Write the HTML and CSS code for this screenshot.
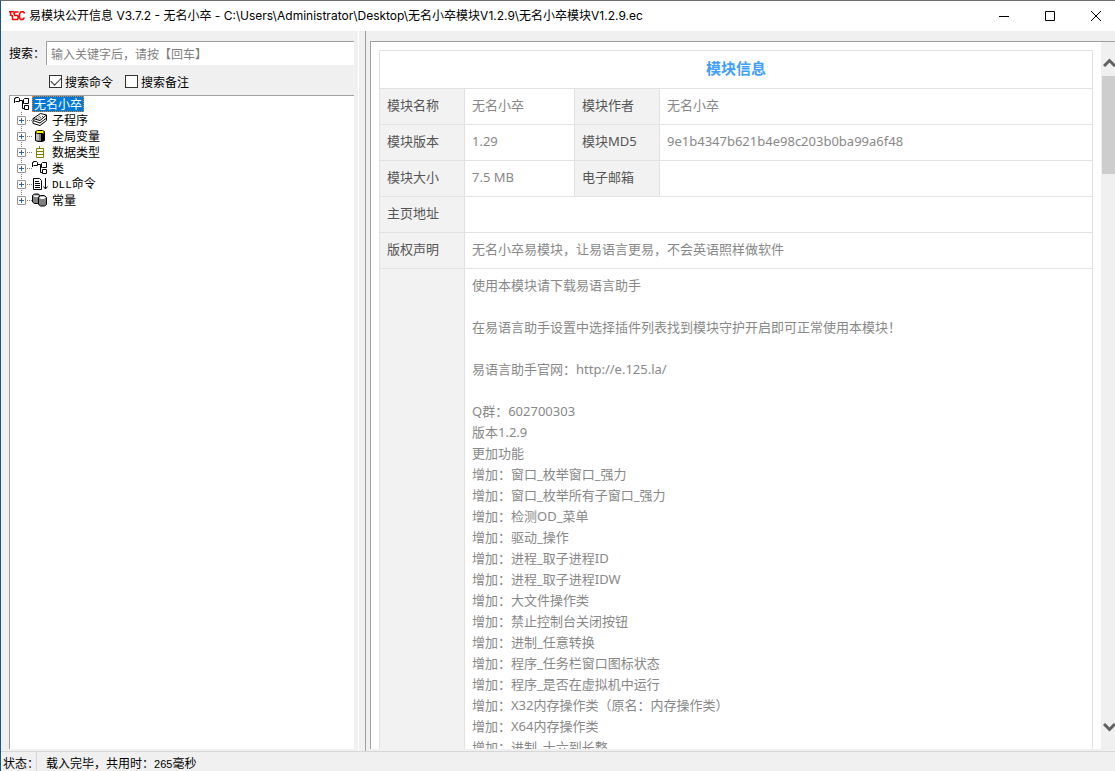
FILE: index.html
```html
<!DOCTYPE html>
<html lang="zh-CN">
<head>
<meta charset="utf-8">
<title>易模块公开信息 V3.7.2</title>
<link rel="stylesheet" href="styles.css">
</head>
<body>
<svg class="defs" aria-hidden="true">
  <symbol id="i-class" viewBox="0 0 16 16">
    <path d="M.5 7V2.500h1v-1h3l1 1v3h-4M5.500 4.500h3v8h2M10.500 7.500h-1v-4l1-1h4v5zM10.500 9.500h4v4h-4z" fill="none" stroke="#000"/>
  </symbol>
  <symbol id="i-sub" viewBox="0 0 16 16">
    <path d="M1 10l6-6 8-2-1 9-7 4-5-2z" fill="#fff"/>
    <path d="M1 6.500L8.500 1.500l6 1.500L8 8.500zM1 6.500v2L8 11l6.500-5V3M1 9v2.500L8 13.500 14.500 8.500V6" fill="none" stroke="#000"/>
    <path d="M4 6.500l5-3M6.500 7l5-3" stroke="#000" stroke-dasharray="1 1"/>
  </symbol>
  <symbol id="i-global" viewBox="0 0 16 16">
    <path d="M3.500 4v8.500l2 1h5l2-1V4z" fill="#808080" stroke="#000"/>
    <path d="M9 6h3v7H9z" fill="#000"/><path d="M4 6h3v6H4z" fill="#c0c0c0"/>
    <path d="M5.500 2.500h5l2 1v1l-2 1h-5l-2-1v-1z" fill="#ff0" stroke="#000"/>
  </symbol>
  <symbol id="i-type" viewBox="0 0 16 16">
    <path d="M4.500 4.500h7v9h-7zM4.500 7.500h7M4.500 10.500h7M7.500 2v2" fill="none" stroke="#808000"/>
  </symbol>
  <symbol id="i-dll" viewBox="0 0 16 16">
    <path d="M1.500 2.500h6l2 2v9h-8zM3 5.500h4M3 7.500h5M3 9.500h5M3 11.500h5M13.500 2v11M11.500 10.500l2 2.500 2-2.500" fill="none" stroke="#000"/>
  </symbol>
  <symbol id="i-const" viewBox="0 0 16 16">
    <path d="M.5 3.500l2-1.500h4l1 1.500V10l-2 1.500h-3l-2-1.500z" fill="#808080" stroke="#000"/>
    <path d="M1 3.500h6L5.500 5h-3z" fill="#fff"/>
    <path d="M6.500 5.500l2-2h4l2 2v7l-2 1.500h-4l-2-1.500z" fill="#808080" stroke="#000"/>
    <path d="M7 5.500l2-1h3l2 1-2 1.500H9z" fill="#fff"/>
  </symbol>
</svg>
<div class="window">
  <header class="titlebar">
    <svg class="logo" viewBox="0 0 16 12" aria-hidden="true"><g fill="none" stroke="#f00" stroke-width="1.500"><path d="M0 1.700h5M1.500 2v3l2 1v4M9.500 2H6L5 3.500 6 5.500h2.500l1 1.500-1 2.500H4M15.500 3.500l-1-1.800H12L10.500 4v3.500l1 2H14l1.500-2"/></g></svg>
    <h1 class="title">易模块公开信息 V3.7.2 - 无名小卒 - C:\Users\Administrator\Desktop\无名小卒模块V1.2.9\无名小卒模块V1.2.9.ec</h1>
    <div class="caption">
      <button class="cap" aria-label="最小化"><svg viewBox="0 0 10 10"><path d="M0 5.500h10"/></svg></button>
      <button class="cap" aria-label="最大化"><svg viewBox="0 0 10 10"><path d="M.5.500h9v9h-9z"/></svg></button>
      <button class="cap" aria-label="关闭"><svg viewBox="0 0 10 10"><path d="M0 0l10 10M10 0L0 10"/></svg></button>
    </div>
  </header>
  <main class="body">
    <section class="left">
      <div class="search">
        <label for="q">搜索：</label>
        <input id="q" class="query" type="text" placeholder="输入关键字后，请按【回车】">
      </div>
      <div class="options">
        <label class="opt"><input type="checkbox" checked>搜索命令</label>
        <label class="opt"><input type="checkbox">搜索备注</label>
      </div>
      <div class="tree">
        <div class="node"><svg class="icon"><use href="#i-class"/></svg><span class="name selected">无名小卒</span></div>
        <ul class="children">
          <li class="node"><button class="expander" aria-label="展开"></button><svg class="icon"><use href="#i-sub"/></svg><span class="name">子程序</span></li>
          <li class="node"><button class="expander" aria-label="展开"></button><svg class="icon"><use href="#i-global"/></svg><span class="name">全局变量</span></li>
          <li class="node"><button class="expander" aria-label="展开"></button><svg class="icon"><use href="#i-type"/></svg><span class="name">数据类型</span></li>
          <li class="node"><button class="expander" aria-label="展开"></button><svg class="icon"><use href="#i-class"/></svg><span class="name">类</span></li>
          <li class="node"><button class="expander" aria-label="展开"></button><svg class="icon"><use href="#i-dll"/></svg><span class="name"><span class="latin">DLL</span>命令</span></li>
          <li class="node"><button class="expander" aria-label="展开"></button><svg class="icon"><use href="#i-const"/></svg><span class="name">常量</span></li>
        </ul>
      </div>
    </section>
    <div class="splitter"></div>
    <section class="right">
      <div class="view">
        <div class="page">
          <table class="info">
            <colgroup><col class="c-label"><col class="c-value"><col class="c-label"><col></colgroup>
            <thead><tr><th class="heading" colspan="4">模块信息</th></tr></thead>
            <tbody>
              <tr><th>模块名称</th><td>无名小卒</td><th>模块作者</th><td>无名小卒</td></tr>
              <tr><th>模块版本</th><td>1.29</td><th>模块MD5</th><td>9e1b4347b621b4e98c203b0ba99a6f48</td></tr>
              <tr><th>模块大小</th><td>7.5 MB</td><th>电子邮箱</th><td></td></tr>
              <tr><th>主页地址</th><td colspan="3"></td></tr>
              <tr><th>版权声明</th><td colspan="3">无名小卒易模块，让易语言更易，不会英语照样做软件</td></tr>
              <tr><th></th><td colspan="3">使用本模块请下载易语言助手<br><br>在易语言助手设置中选择插件列表找到模块守护开启即可正常使用本模块！<br><br>易语言助手官网：http://e.125.la/<br><br>Q群：602700303<br>版本1.2.9<br>更加功能<br>增加：窗口_枚举窗口_强力<br>增加：窗口_枚举所有子窗口_强力<br>增加：检测OD_菜单<br>增加：驱动_操作<br>增加：进程_取子进程ID<br>增加：进程_取子进程IDW<br>增加：大文件操作类<br>增加：禁止控制台关闭按钮<br>增加：进制_任意转换<br>增加：程序_任务栏窗口图标状态<br>增加：程序_是否在虚拟机中运行<br>增加：X32内存操作类（原名：内存操作类）<br>增加：X64内存操作类<br>增加：进制_十六到长整</td></tr>
            </tbody>
          </table>
        </div>
        <div class="scrollbar">
          <button class="arrow up" aria-label="向上滚动"><svg viewBox="0 0 13 9"><path d="M1 8l5.500-5.500L12 8"/></svg></button>
          <div class="track"><div class="thumb"></div></div>
          <button class="arrow down" aria-label="向下滚动"><svg viewBox="0 0 13 9"><path d="M1 1l5.500 5.500L12 1"/></svg></button>
        </div>
      </div>
    </section>
  </main>
  <footer class="status"><span class="state">状态：</span><span class="message">载入完毕，共用时：<span class="digits">265</span>毫秒</span></footer>
</div>
</body>
</html>
```
FILE: styles.css
```css
* { box-sizing: border-box; }
html, body { height: 100%; margin: 0; }
body { overflow: hidden; color: #000; font: 12px/16px "Noto Sans CJK SC", sans-serif; }
button { padding: 0; border: 0; background: none; }
.defs { position: absolute; width: 0; height: 0; }
.window { display: flex; flex-direction: column; height: 100vh; background: #f0f0f0; border-top: 1px solid #6e6e6e; border-left: 1px solid #1b5878; }

.titlebar { display: flex; flex: none; align-items: center; height: 30px; padding-left: 8px; background: #fff; }
.logo { flex: none; width: 16px; height: 12px; margin-right: 4px; }
.title { flex: 1; margin: 0; overflow: hidden; white-space: nowrap; font: 12px/16px Inter, "Noto Sans CJK SC", sans-serif; }
.caption { display: flex; flex: none; margin-right: -4px; }
.cap { display: grid; place-items: center; width: 46px; height: 30px; }
.cap svg { width: 10px; height: 10px; fill: none; stroke: #000; }

.body { display: flex; flex: 1; min-height: 0; }
.left { display: flex; flex-direction: column; width: 357px; padding: 10px 4px 2px 8px; }
.search { display: flex; align-items: center; height: 24px; }
.search label { width: 37px; white-space: nowrap; }
.query { flex: 1; min-width: 0; height: 24px; padding: 0 4px; border: 0; border-top: 1px solid #a0a0a0; border-left: 1px solid #a0a0a0; background: #fff; font: inherit; outline: 0; }
.query::placeholder { color: #808080; opacity: 1; }
.options { display: flex; gap: 12px; margin: 8px 0 5px 40px; }
.opt { display: flex; align-items: center; gap: 3px; height: 17px; }
.opt input { appearance: none; width: 13px; height: 13px; margin: 0; border: 1px solid #333; background: #fff; display: grid; place-items: center; }
.opt input:checked::before { content: ""; width: 9px; height: 5px; margin-bottom: 3px; border: solid #333; border-width: 0 0 1px 1px; rotate: -45deg; }
.tree { flex: 1; min-height: 0; border-top: 1px solid #a0a0a0; border-left: 1px solid #a0a0a0; background: #fff; padding-left: 4px; }
.children { margin: 0 0 0 3px; padding: 0; list-style: none; background: repeating-linear-gradient(#808080 0 1px, transparent 1px 2px) 4px 0 / 1px 88px no-repeat; }
.node { display: flex; align-items: center; height: 16px; }
.icon { flex: none; width: 16px; height: 16px; margin-right: 2px; }
.name { padding: 0 2px; line-height: 16px; white-space: nowrap; }
.selected { background: #0078d7; color: #fff; outline: 1px dotted #e0892b; outline-offset: -1px; }
.latin { font: 11px/16px "Liberation Mono", monospace; }
.digits { font: 11px/16px "Liberation Sans", sans-serif; }
.expander { flex: none; width: 9px; height: 9px; margin-right: 6px; position: relative; border: 1px solid #919191; border-radius: 1px; background: linear-gradient(#3c5fa8, #3c5fa8) 1px 3px / 5px 1px no-repeat, linear-gradient(#3c5fa8, #3c5fa8) 3px 1px / 1px 5px no-repeat, #fff; }
.expander::after { content: ""; position: absolute; left: 9px; top: 3px; width: 5px; border-top: 1px dotted #808080; }

.splitter { width: 8px; border-left: 1px solid #fff; border-right: 1px solid #a0a0a0; }
.right { flex: 1; min-width: 0; padding: 10px 0 2px 4px; }
.view { display: flex; height: 100%; border-top: 1px solid #a0a0a0; border-left: 1px solid #a0a0a0; background: #fff; }
.page { flex: 1; min-width: 0; overflow: hidden; padding: 8px; }
.info { width: 100%; table-layout: fixed; border-collapse: collapse; color: #888; font: 13px/21px "Noto Sans", "Noto Sans CJK SC", sans-serif; }
.c-label { width: 85px; }
.c-value { width: 110px; }
.info th, .info td { height: 36px; padding: 6px 7px 8px; border: 1px solid #e2e2e2; text-align: left; font-weight: 400; vertical-align: top; }
.info th { background: #f2f2f2; color: #555; }
.info .heading { height: 38px; padding: 7px 7px 9px; background: #fff; color: #409eff; font-size: 15px; font-weight: 700; text-align: center; }
.scrollbar { display: flex; flex: none; flex-direction: column; width: 14px; background: #f0f0f0; overflow: hidden; }
.arrow { display: flex; flex: none; align-items: flex-start; height: 34px; padding-left: 2px; }
.up { padding-top: 16px; }
.down { padding-top: 8px; }
.arrow svg { flex: none; width: 13px; height: 9px; fill: none; stroke: #606060; stroke-width: 3; }
.track { flex: 1; padding-left: 1px; }
.thumb { height: 98px; background: #cdcdcd; }

.status { display: flex; flex: none; height: 20px; border-top: 1px solid #d7d7d7; line-height: 22px; }
.state { width: 36px; padding-left: 2px; border-right: 1px solid #d7d7d7; white-space: nowrap; }
.message { padding-left: 9px; }
```
